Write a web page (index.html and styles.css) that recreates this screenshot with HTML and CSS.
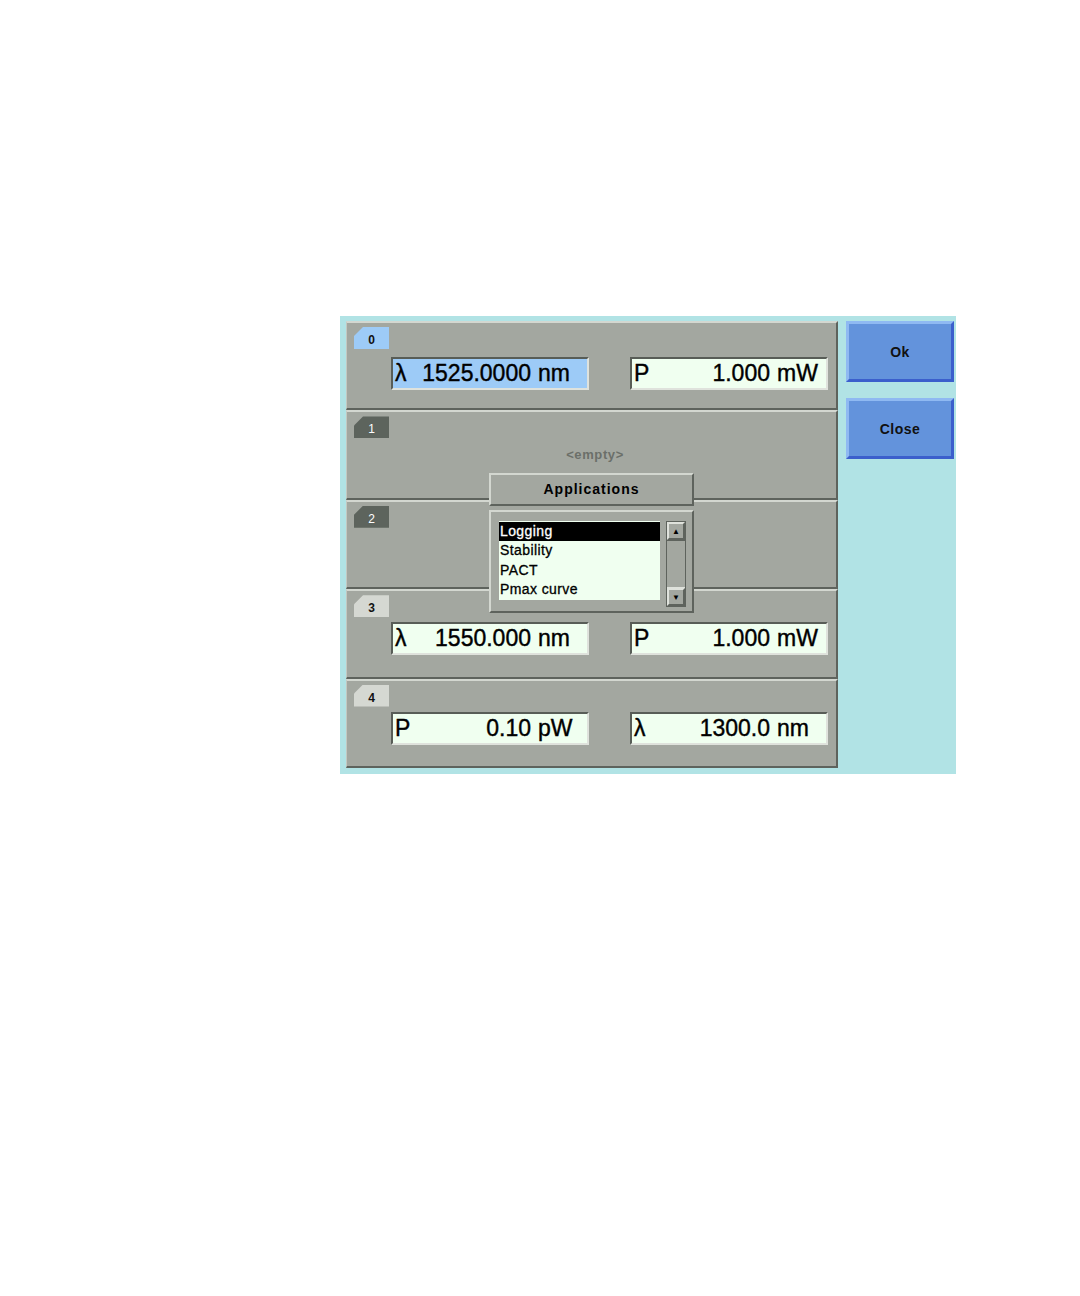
FILE: index.html
```html
<!DOCTYPE html>
<html lang="en">
<head>
    <meta charset="UTF-8">
    <title>Applications</title>
    <link rel="stylesheet" href="styles.css">
</head>
<body>
    <div class="screen">
        <div class="rows">
            <div class="row">
                <div class="tab tabActive">0</div>
                <div class="fields">
                    <div class="field fieldActive"><span class="lbl">λ</span><span class="val">1525.0000</span><span class="unit">nm</span></div>
                    <div class="field"><span class="lbl">P</span><span class="val">1.000</span><span class="unit">mW</span></div>
                </div>
            </div>
            <div class="row">
                <div class="tab tabDark">1</div>
                <div class="empty">&lt;empty&gt;</div>
            </div>
            <div class="row">
                <div class="tab tabDark">2</div>
            </div>
            <div class="row">
                <div class="tab">3</div>
                <div class="fields fieldsUp">
                    <div class="field"><span class="lbl">λ</span><span class="val">1550.000</span><span class="unit">nm</span></div>
                    <div class="field"><span class="lbl">P</span><span class="val">1.000</span><span class="unit">mW</span></div>
                </div>
            </div>
            <div class="row">
                <div class="tab">4</div>
                <div class="fields fieldsUp">
                    <div class="field"><span class="lbl">P</span><span class="val">0.10</span><span class="unit">pW</span></div>
                    <div class="field"><span class="lbl">λ</span><span class="val">1300.0</span><span class="unit">nm</span></div>
                </div>
            </div>
        </div>
        <div class="buttons">
            <div class="btn">Ok</div>
            <div class="btn">Close</div>
        </div>

        <div class="popup">
            <div class="popupHead">Applications</div>
            <div class="popupBody">
                <ul class="list">
                    <li class="selected">Logging</li>
                    <li>Stability</li>
                    <li>PACT</li>
                    <li>Pmax curve</li>
                </ul>
                <div class="scrollbar">
                    <div class="arrow">▲</div>
                    <div class="track"></div>
                    <div class="arrow">▼</div>
                </div>
            </div>
        </div>
    </div>
</body>
</html>
```

FILE: styles.css
```css
*{
    margin: 0;
    padding: 0;
    box-sizing: border-box;
}
body{
    background: #fff;
    padding: 316px 0 0 340px;
    font-family: "Liberation Sans", Arial, sans-serif;
}
.screen{
    position: relative;
    width: 616px;
    height: 458px;
    background: #b1e3e5;
    display: flex;
    gap: 8px;
    padding: 5px 2px 0 6px;
}
.rows{
    width: 492px;
    display: flex;
    flex-direction: column;
}
.row{
    position: relative;
    height: 89.4px;
    background: #a3a7a0;
    border-top: 2px solid #d3d7d0;
    border-left: 1px solid #c4c8c1;
    border-bottom: 2px solid #5e635d;
    border-right: 2px solid #5e635d;
    padding: 4px 0 0 7px;
}
.tab{
    width: 35px;
    height: 22px;
    background: #d5d8d2;
    color: #111;
    font-size: 12px;
    font-weight: bold;
    text-align: center;
    line-height: 26px;
    clip-path: polygon(9px 0, 100% 0, 100% 100%, 0 100%, 0 9px);
}
.tabActive{
    background: #9dcbf7;
}
.tabDark{
    background: #5d645d;
    color: #fff;
    font-weight: normal;
}
.fields{
    display: flex;
    gap: 41px;
    margin: 8px 0 0 37px;
}
.fieldsUp{
    margin-top: 5px;
}
.field{
    width: 198px;
    height: 33px;
    display: flex;
    align-items: center;
    background: #f0fff0;
    border-top: 2px solid #585d57;
    border-left: 2px solid #585d57;
    border-bottom: 2px solid #dfe2dc;
    border-right: 2px solid #dfe2dc;
    font-size: 23px;
    color: #000;
    -webkit-text-stroke: 0.4px #000;
    padding-left: 2px;
}
.fieldActive{
    background: #9dcbf7;
}
.lbl{
    width: 18px;
}
.val{
    flex: 1;
    text-align: right;
}
.unit{
    width: 56px;
    padding-left: 7px;
}
.empty{
    text-align: center;
    font-size: 13px;
    font-weight: bold;
    color: #6b6f69;
    letter-spacing: 0.6px;
    margin-top: 9px;
}
.buttons{
    display: flex;
    flex-direction: column;
    gap: 16px;
}
.btn{
    width: 108px;
    height: 61px;
    background: #6393dc;
    border-top: 3px solid #8fb9f2;
    border-left: 3px solid #8fb9f2;
    border-bottom: 3px solid #3b5fcc;
    border-right: 3px solid #3b5fcc;
    display: flex;
    align-items: center;
    justify-content: center;
    font-size: 14px;
    font-weight: bold;
    color: #111;
    letter-spacing: 0.5px;
}
.popup{
    position: absolute;
    left: 149px;
    top: 157px;
    width: 205px;
}
.popupHead{
    height: 33px;
    background: #a3a7a0;
    border-top: 2px solid #d3d7d0;
    border-left: 2px solid #d3d7d0;
    border-bottom: 2px solid #5e635d;
    border-right: 2px solid #5e635d;
    text-align: center;
    line-height: 29px;
    font-size: 14px;
    font-weight: bold;
    letter-spacing: 1px;
    color: #000;
}
.popupBody{
    margin-top: 4px;
    height: 103px;
    background: #a3a7a0;
    border-top: 2px solid #d3d7d0;
    border-left: 2px solid #d3d7d0;
    border-bottom: 2px solid #5e635d;
    border-right: 2px solid #5e635d;
    display: flex;
    gap: 6px;
    padding: 9px 0 0 8px;
}
.list{
    list-style: none;
    width: 161px;
    height: 79px;
    background: #f0fff0;
    padding-top: 1px;
}
.list li{
    height: 19.3px;
    line-height: 19px;
    font-size: 14px;
    letter-spacing: 0.4px;
    color: #000;
    -webkit-text-stroke: 0.3px #000;
    padding-left: 1px;
}
.list .selected{
    background: #000;
    color: #fff;
    -webkit-text-stroke: 0.3px #fff;
}
.scrollbar{
    width: 20px;
    height: 86px;
    display: flex;
    flex-direction: column;
    border: 1px solid #5e635d;
    background: #a3a7a0;
}
.arrow{
    height: 18px;
    font-size: 8px;
    text-align: center;
    line-height: 15px;
    color: #000;
    border-top: 2px solid #dfe2dc;
    border-left: 2px solid #dfe2dc;
    border-bottom: 2px solid #5e635d;
    border-right: 2px solid #5e635d;
}
.track{
    flex: 1;
    border-top: 1px solid #5e635d;
    border-bottom: 1px solid #dfe2dc;
}
```
